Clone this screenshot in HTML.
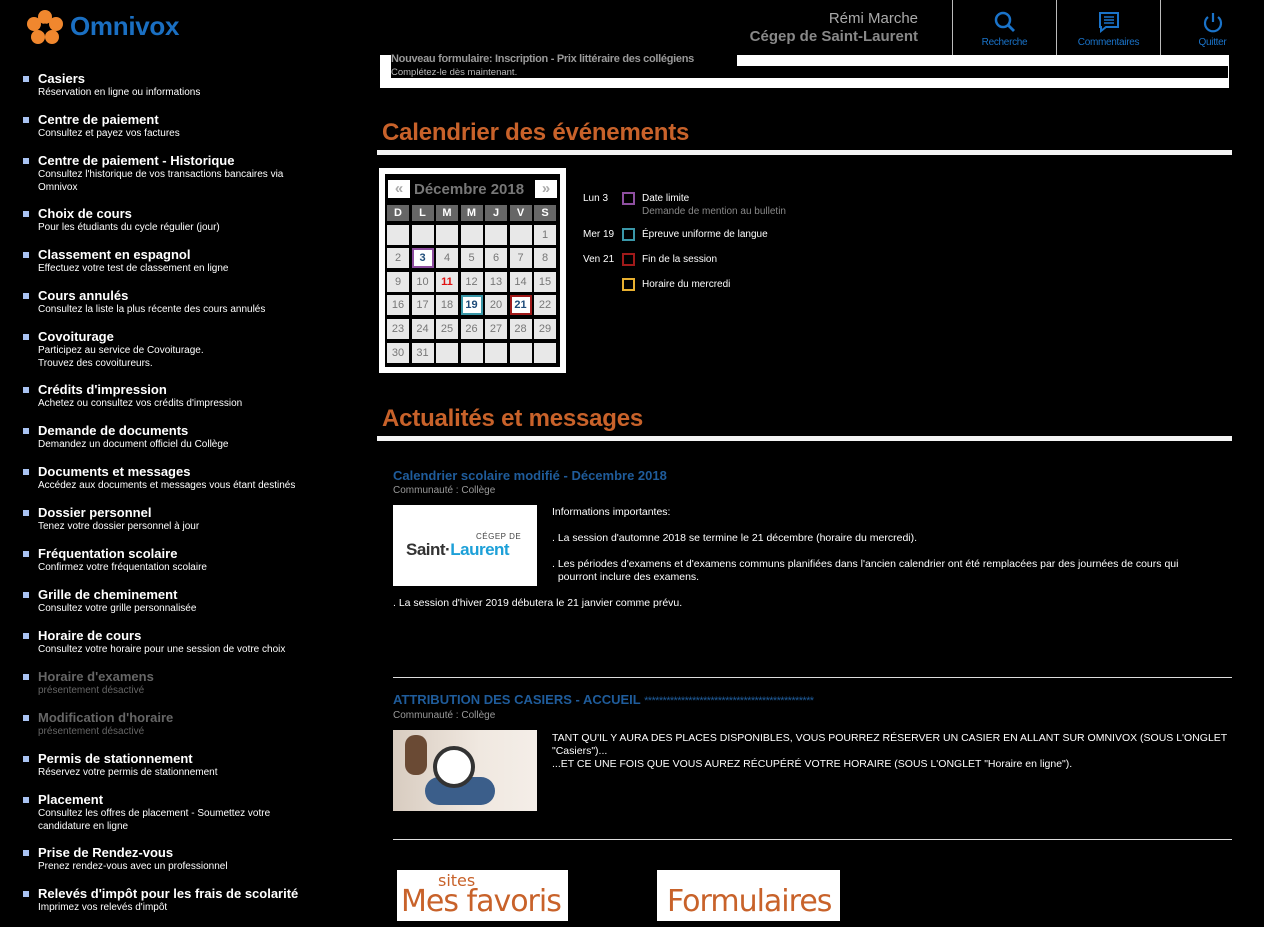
<!DOCTYPE html>
<html><head><meta charset="utf-8"><style>
*{margin:0;padding:0;box-sizing:border-box}
body{width:1264px;height:927px;background:#000;font-family:"Liberation Sans",sans-serif;position:relative;overflow:hidden;color:#fff}
.a{position:absolute}
.it{position:absolute;left:38px;width:300px}
.it b{display:block;font-size:13px;line-height:15px;color:#fff}
.it span{display:block;font-size:10px;line-height:12.5px;margin-top:1px;color:#fff}
.it:before{content:"";position:absolute;left:-15px;top:5px;width:6px;height:6px;background:#a9c3f2}
.it.d b,.it.d span{color:#666}
.nav{position:absolute;top:0;height:55px;width:104px;border-left:1px solid #bbb;text-align:center;color:#1a73c9;font-size:10px}
.nav div{position:absolute;top:37px;width:100%;letter-spacing:-.3px}
.nav svg{position:absolute;top:11px;left:41px}
h2{position:absolute;left:382px;font-size:24px;color:#c8622a;font-weight:bold;letter-spacing:-.2px}
.bar{position:absolute;left:377px;width:855px;height:5px;background:#f4f4f4}
.cal{position:absolute;left:379px;top:168px;width:187px;height:205px;background:#fff}
.calin{position:absolute;left:6px;top:6px;width:175px;height:193px;background:#000}
.grid{position:absolute;left:387px;top:205px;display:grid;grid-template-columns:repeat(7,22px);column-gap:2.5px;row-gap:3.6px;grid-template-rows:16px;grid-auto-rows:20px}
.grid div{background:#e8e8e8;color:#777;font-size:11px;text-align:center;line-height:20px}
.grid .h{background:#666;color:#fff;font-weight:bold;font-size:11px;line-height:16px}
.lg{position:absolute;font-size:10px;color:#fff}
.sq{position:absolute;left:622px;width:13px;height:13px;border:2px solid}
.p{font-size:10.5px;color:#fff;position:absolute;left:552px;line-height:13px}
.hr{position:absolute;left:393px;width:839px;height:1px;background:#ddd}
.nt{position:absolute;left:393px;font-size:13px;font-weight:bold;color:#1f5c9b}
.cm{position:absolute;left:393px;font-size:10px;color:#999}
</style></head><body>
<svg class="a" style="left:27px;top:10px" width="36" height="34" viewBox="0 0 36 34"><g fill="#f0872e"><circle cx="18" cy="7" r="7"/><circle cx="29" cy="14" r="7"/><circle cx="25" cy="27" r="7"/><circle cx="11" cy="27" r="7"/><circle cx="7" cy="14" r="7"/></g><circle cx="18" cy="18" r="4.5" fill="#000"/></svg>
<div class="a" style="left:70px;top:11px;font-size:26px;font-weight:bold;color:#1a6fc2;letter-spacing:-.3px">Omnivox</div>
<div class="a" style="right:346px;top:10px;text-align:right;font-size:15px;line-height:18px;color:#aaa">Rémi Marche<br><b style="color:#888">Cégep de Saint-Laurent</b></div>
<div class="nav" style="left:952px"><svg width="22" height="22" viewBox="0 0 22 22"><circle cx="9" cy="9" r="7" fill="none" stroke="#1a73c9" stroke-width="2.5"/><path d="M14 14l6 6" stroke="#1a73c9" stroke-width="2.8"/></svg><div>Recherche</div></div>
<div class="nav" style="left:1056px"><svg width="22" height="22" viewBox="0 0 22 22"><path d="M2 2h18v14H8l-5 4v-4H2z" fill="none" stroke="#1a73c9" stroke-width="2"/><path d="M6 6h10M6 9h10M6 12h10" stroke="#1a73c9" stroke-width="1.5"/></svg><div>Commentaires</div></div>
<div class="nav" style="left:1160px;border-right:none"><svg width="22" height="22" viewBox="0 0 22 22"><path d="M6 6a8 8 0 1 0 10 0" fill="none" stroke="#1a73c9" stroke-width="2.2"/><path d="M11 2v9" stroke="#1a73c9" stroke-width="2.2"/></svg><div>Quitter</div></div>

<div class="it" style="top:71px"><b>Casiers</b><span>Réservation en ligne ou informations</span></div>
<div class="it" style="top:112px"><b>Centre de paiement</b><span>Consultez et payez vos factures</span></div>
<div class="it" style="top:153px"><b>Centre de paiement - Historique</b><span>Consultez l'historique de vos transactions bancaires via<br>Omnivox</span></div>
<div class="it" style="top:206px"><b>Choix de cours</b><span>Pour les étudiants du cycle régulier (jour)</span></div>
<div class="it" style="top:247px"><b>Classement en espagnol</b><span>Effectuez votre test de classement en ligne</span></div>
<div class="it" style="top:288px"><b>Cours annulés</b><span>Consultez la liste la plus récente des cours annulés</span></div>
<div class="it" style="top:329px"><b>Covoiturage</b><span>Participez au service de Covoiturage.<br>Trouvez des covoitureurs.</span></div>
<div class="it" style="top:382px"><b>Crédits d'impression</b><span>Achetez ou consultez vos crédits d'impression</span></div>
<div class="it" style="top:423px"><b>Demande de documents</b><span>Demandez un document officiel du Collège</span></div>
<div class="it" style="top:464px"><b>Documents et messages</b><span>Accédez aux documents et messages vous étant destinés</span></div>
<div class="it" style="top:505px"><b>Dossier personnel</b><span>Tenez votre dossier personnel à jour</span></div>
<div class="it" style="top:546px"><b>Fréquentation scolaire</b><span>Confirmez votre fréquentation scolaire</span></div>
<div class="it" style="top:587px"><b>Grille de cheminement</b><span>Consultez votre grille personnalisée</span></div>
<div class="it" style="top:628px"><b>Horaire de cours</b><span>Consultez votre horaire pour une session de votre choix</span></div>
<div class="it d" style="top:669px"><b>Horaire d'examens</b><span>présentement désactivé</span></div>
<div class="it d" style="top:710px"><b>Modification d'horaire</b><span>présentement désactivé</span></div>
<div class="it" style="top:751px"><b>Permis de stationnement</b><span>Réservez votre permis de stationnement</span></div>
<div class="it" style="top:792px"><b>Placement</b><span>Consultez les offres de placement - Soumettez votre<br>candidature en ligne</span></div>
<div class="it" style="top:845px"><b>Prise de Rendez-vous</b><span>Prenez rendez-vous avec un professionnel</span></div>
<div class="it" style="top:886px"><b>Relevés d'impôt pour les frais de scolarité</b><span>Imprimez vos relevés d'impôt</span></div>

<div class="a" style="left:380px;top:55px;width:849px;height:33px;background:#fff"></div>
<div class="a" style="left:391px;top:55px;width:346px;height:11px;background:#000"></div>
<div class="a" style="left:391px;top:66px;width:837px;height:12px;background:#000"></div>
<div class="a" style="left:391px;top:53px;font-size:11px;font-weight:bold;color:#999;letter-spacing:-.3px">Nouveau formulaire: Inscription - Prix littéraire des collégiens</div>
<div class="a" style="left:391px;top:67px;font-size:9.5px;color:#bbb">Complétez-le dès maintenant.</div>

<h2 style="top:119px">Calendrier des événements</h2>
<div class="bar" style="top:150px"></div>

<div class="cal"><div class="calin"></div></div>
<div class="a" style="left:388px;top:180px;width:22px;height:18px;background:#fff;color:#aaa;font-size:15px;text-align:center;line-height:18px;font-weight:bold">«</div>
<div class="a" style="left:535px;top:180px;width:22px;height:18px;background:#fff;color:#aaa;font-size:15px;text-align:center;line-height:18px;font-weight:bold">»</div>
<div class="a" style="left:414px;top:181px;font-size:15px;font-weight:bold;color:#777">Décembre 2018</div>
<div class="grid">
<div class="h">D</div><div class="h">L</div><div class="h">M</div><div class="h">M</div><div class="h">J</div><div class="h">V</div><div class="h">S</div>
<div></div><div></div><div></div><div></div><div></div><div></div><div>1</div>
<div>2</div><div style="background:#fff;border:2px solid #8e4fa0;line-height:16px;color:#1f4c7a;font-weight:bold">3</div><div>4</div><div>5</div><div>6</div><div>7</div><div>8</div>
<div>9</div><div>10</div><div style="color:#e01010;font-weight:bold">11</div><div>12</div><div>13</div><div>14</div><div>15</div>
<div>16</div><div>17</div><div>18</div><div style="background:#fff;border:2px solid #3a97a8;line-height:16px;color:#1f4c7a;font-weight:bold">19</div><div>20</div><div style="background:#fff;border:2px solid #a01a1a;line-height:16px;color:#1f4c7a;font-weight:bold">21</div><div>22</div>
<div>23</div><div>24</div><div>25</div><div>26</div><div>27</div><div>28</div><div>29</div>
<div>30</div><div>31</div><div></div><div></div><div></div><div></div><div></div>
</div>
<div class="lg" style="left:583px;top:193px">Lun 3</div>
<div class="sq" style="top:192px;border-color:#8e4fa0"></div>
<div class="lg" style="left:642px;top:193px">Date limite</div>
<div class="lg" style="left:642px;top:206px;color:#888">Demande de mention au bulletin</div>
<div class="lg" style="left:583px;top:229px">Mer 19</div>
<div class="sq" style="top:228px;border-color:#3a97a8"></div>
<div class="lg" style="left:642px;top:229px">Épreuve uniforme de langue</div>
<div class="lg" style="left:583px;top:254px">Ven 21</div>
<div class="sq" style="top:253px;border-color:#a01a1a"></div>
<div class="lg" style="left:642px;top:254px">Fin de la session</div>
<div class="sq" style="top:278px;border-color:#e8b030"></div>
<div class="lg" style="left:642px;top:279px">Horaire du mercredi</div>

<h2 style="top:405px">Actualités et messages</h2>
<div class="bar" style="top:436px"></div>

<div class="nt" style="top:468px">Calendrier scolaire modifié - Décembre 2018</div>
<div class="cm" style="top:485px">Communauté : Collège</div>
<div class="a" style="left:393px;top:505px;width:144px;height:81px;background:#fff"></div>
<div class="a" style="left:476px;top:532px;font-size:8px;color:#444;letter-spacing:.5px">CÉGEP DE</div>
<div class="a" style="left:406px;top:540px;font-size:17px;font-weight:bold;color:#333;letter-spacing:-.5px">Saint·<span style="color:#1da0d8">Laurent</span></div>
<div class="p" style="top:506px">Informations importantes:</div>
<div class="p" style="top:532px">. La session d'automne 2018 se termine le 21 décembre (horaire du mercredi).</div>
<div class="p" style="top:558px">. Les périodes d'examens et d'examens communs planifiées dans l'ancien calendrier ont été remplacées par des journées de cours qui<br>&nbsp;&nbsp;pourront inclure des examens.</div>
<div class="p" style="left:393px;top:597px">. La session d'hiver 2019 débutera le 21 janvier comme prévu.</div>
<div class="hr" style="top:677px"></div>

<div class="nt" style="top:692px">ATTRIBUTION DES CASIERS - ACCUEIL <span style="font-size:11px;font-weight:normal;letter-spacing:-.6px">**********************************************</span></div>
<div class="cm" style="top:710px">Communauté : Collège</div>
<div class="a" style="left:393px;top:730px;width:144px;height:81px;background:linear-gradient(90deg,#d8ccc0,#f0e8e0 60%,#f4eee8)"></div>
<div class="a" style="left:425px;top:777px;width:70px;height:28px;border-radius:30px;background:#3b5e8a"></div>
<div class="a" style="left:433px;top:746px;width:42px;height:42px;border-radius:50%;background:#fff;border:4px solid #333"></div>
<div class="a" style="left:405px;top:735px;width:22px;height:40px;border-radius:10px;background:#6a4a34"></div>
<div class="p" style="top:732px">TANT QU'IL Y AURA DES PLACES DISPONIBLES, VOUS POURREZ RÉSERVER UN CASIER EN ALLANT SUR OMNIVOX (SOUS L'ONGLET<br>"Casiers")...<br>...ET CE UNE FOIS QUE VOUS AUREZ RÉCUPÉRÉ VOTRE HORAIRE (SOUS L'ONGLET "Horaire en ligne").</div>
<div class="hr" style="top:839px"></div>

<div class="a" style="left:397px;top:870px;width:171px;height:51px;background:#fff"></div>
<div class="a" style="left:438px;top:871px;font-size:16px;color:#c8622a;font-family:'DejaVu Sans',sans-serif">sites</div>
<div class="a" style="left:401px;top:884px;font-size:30px;color:#c8622a;font-family:'DejaVu Sans',sans-serif;letter-spacing:-1px">Mes favoris</div>
<div class="a" style="left:657px;top:870px;width:183px;height:51px;background:#fff"></div>
<div class="a" style="left:667px;top:884px;font-size:30px;color:#c8622a;font-family:'DejaVu Sans',sans-serif;letter-spacing:-1px">Formulaires</div>
</body></html>
